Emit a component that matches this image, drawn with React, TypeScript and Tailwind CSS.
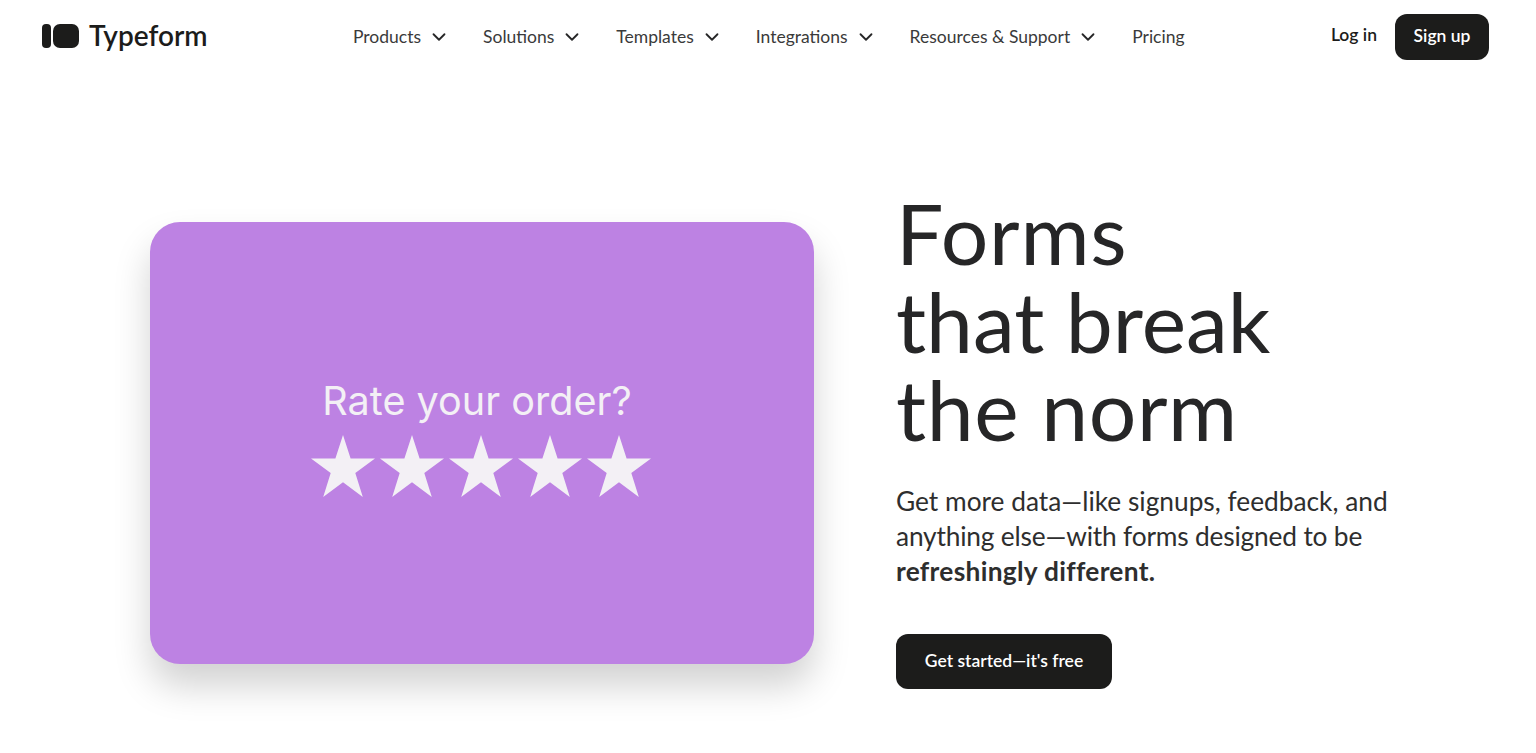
import { ChevronDown } from "lucide-react";

const navItems = [
  { label: "Products", menu: true },
  { label: "Solutions", menu: true },
  { label: "Templates", menu: true },
  { label: "Integrations", menu: true },
  { label: "Resources & Support", menu: true },
  { label: "Pricing", menu: false },
];

function Star() {
  return (
    <svg viewBox="0 0 64 62" className="h-[62px] w-[64px]" aria-hidden="true">
      <path d="M32 0 L39.6 23.5 L64 23.5 L44.3 38 L51.8 62 L32 47.2 L12.2 62 L19.7 38 L0 23.5 L24.4 23.5 Z" fill="#f3f0f5" />
    </svg>
  );
}

export default function App() {
  return (
    <div className="h-[753px] w-[1536px] overflow-hidden bg-white text-[#262627] [font-family:Lato,sans-serif]">
      <header className="flex h-[72px] items-center pl-[42px] pr-[47px]">
        <div className="flex w-[311px] items-center">
          <div className="flex items-center gap-[2px]">
            <span className="h-[24px] w-[9px] rounded-[4px] bg-[#1c1c1b]" />
            <span className="h-[24px] w-[26px] rounded-[7px] bg-[#1c1c1b]" />
          </div>
          <span className="mb-[2px] ml-[10px] text-[28px] font-semibold leading-none text-[#1c1c1b]">Typeform</span>
        </div>
        <nav className="flex items-center gap-[33px] pt-[1px]">
          {navItems.map((item) => (
            <a key={item.label} className="flex items-center gap-[7px] text-[17.5px] leading-none text-[#3a3a3a]">
              {item.label}
              {item.menu && <ChevronDown size={22} strokeWidth={2} className="text-[#262627]" />}
            </a>
          ))}
        </nav>
        <div className="ml-auto flex items-center gap-[18px] pt-[1px]">
          <span className="mb-[3px] text-[17.5px] font-semibold leading-none text-[#1c1c1b]">Log in</span>
          <button className="h-[46px] w-[94px] rounded-[12px] bg-[#1c1c1b] text-[17.5px] font-semibold text-white">Sign up</button>
        </div>
      </header>

      <main className="flex pl-[150px]">
        <div className="mt-[150px] flex h-[442px] w-[664px] flex-col items-center rounded-[30px] bg-[#bd82e3] pt-[156px] shadow-[0_22px_36px_rgba(0,0,0,0.18)]">
          <p className="pr-[10px] text-[39.6px] font-normal leading-[46px] text-[#f3f0f5] [font-family:Inter,sans-serif]">Rate your order?</p>
          <div className="mt-[11px] flex gap-[5px] pr-[3px]">
            <Star />
            <Star />
            <Star />
            <Star />
            <Star />
          </div>
        </div>

        <div className="ml-[82px] pt-[117px]">
          <h1 className="text-[84px] font-normal leading-[88px] text-[#262627]">
            <span className="tracking-[0.8px]">Forms</span>
            <br />
            that break
            <br />
            <span className="tracking-[0.6px]">the norm</span>
          </h1>
          <p className="mt-[31px] text-[26.3px] leading-[35px] text-[#2e2e2e]">
            Get more data—like signups, feedback, and
            <br />
            <span className="tracking-[-0.18px]">anything else—with forms designed to be</span>
            <br />
            <strong className="font-bold tracking-[0.3px]">refreshingly different.</strong>
          </p>
          <button className="mt-[45px] h-[55px] w-[216px] rounded-[12px] bg-[#1c1c1b] text-[17.5px] font-semibold text-white">
            Get started—it's free
          </button>
        </div>
      </main>
    </div>
  );
}
